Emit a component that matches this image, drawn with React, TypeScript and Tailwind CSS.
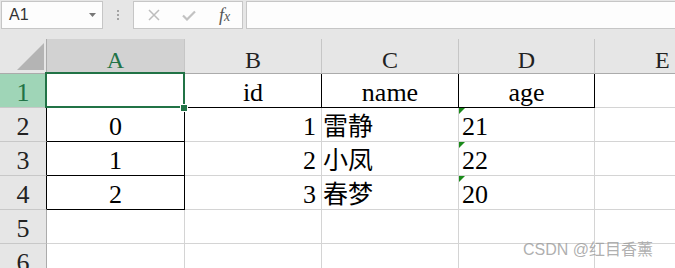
import React from 'react';

const serif = "font-['Liberation_Serif','Noto_Sans_CJK_SC',serif]";

type Row = { n: number; a: string; b: string; c: string; d: string };

const rows: Row[] = [
  { n: 2, a: '0', b: '1', c: '雷静', d: '21' },
  { n: 3, a: '1', b: '2', c: '小凤', d: '22' },
  { n: 4, a: '2', b: '3', c: '春梦', d: '20' },
];

// 左上角綠色小三角（文字格式數字）
function GreenFlag() {
  return (
    <svg className="absolute left-0 top-0" width="6" height="6" viewBox="0 0 6 6">
      <polygon points="0,0 6,0 0,6" fill="#1a8a1a" />
    </svg>
  );
}

function Toolbar() {
  return (
    <div className="flex h-[39px] items-start bg-[#e6e6e6] pt-[1px] pl-[1px]">
      <div className="flex h-[28px] w-[102px] items-center justify-between border border-[#c6c6c6] bg-[#fdfdfd] pl-[7px] pr-[6px]">
        <span className="font-['Liberation_Sans',sans-serif] text-[16px] text-[#333]">A1</span>
        <svg width="7" height="4" viewBox="0 0 7 4">
          <polygon points="0,0 7,0 3.5,4" fill="#777" />
        </svg>
      </div>
      <div className="flex h-[28px] w-[30px] flex-col items-center justify-center gap-[2px] pr-[1px]">
        <span className="h-[2px] w-[2px] bg-[#a3a3a3]" />
        <span className="h-[2px] w-[2px] bg-[#a3a3a3]" />
        <span className="h-[2px] w-[2px] bg-[#a3a3a3]" />
      </div>
      <div className="flex h-[28px] w-[110px] items-center border border-[#c6c6c6] bg-[#fdfdfd]">
        <div className="flex w-[37px] justify-center pl-[2px]">
          <svg width="12" height="12" viewBox="0 0 12 12">
            <path d="M1 1 L11 11 M11 1 L1 11" stroke="#bdbdbd" strokeWidth="1.5" />
          </svg>
        </div>
        <div className="flex w-[36px] justify-center">
          <svg width="14" height="11" viewBox="0 0 14 11">
            <path d="M1 5.5 L5 9.5 L13 1.5" stroke="#c2c2c2" strokeWidth="2.2" fill="none" />
          </svg>
        </div>
        <div className="flex w-[35px] justify-center">
          <span className="font-['Liberation_Serif',serif] text-[18px] italic leading-none text-[#555]">
            f<span className="text-[14px]">x</span>
          </span>
        </div>
      </div>
      <div className="ml-[3px] h-[28px] flex-1 border border-r-0 border-[#c6c6c6] bg-[#fdfdfd]" />
    </div>
  );
}

export default function App() {
  return (
    <div className="relative h-[268px] w-[675px] overflow-hidden bg-white">
      <Toolbar />

      <div
        className={`grid grid-cols-[47px_138px_137px_137px_136px_1fr] grid-rows-[35px_repeat(6,34px)] ${serif} text-[26px] leading-none text-black`}
      >
        {/* 欄標題 */}
        <div className="relative border-r border-b border-r-[#ababab] border-b-[#ababab] bg-[#e6e6e6]">
          <svg className="absolute left-[17px] top-[4px]" width="27" height="27" viewBox="0 0 27 27">
            <polygon points="0,27 27,27 27,0" fill="#b4b4b4" />
          </svg>
        </div>
        <div className="flex items-end justify-center border-r border-b border-r-[#c6c6c6] border-b-[#ababab] bg-[#d2d2d2] pb-[1px] text-[24px] text-[#217346]">
          A
        </div>
        <div className="flex items-end justify-center border-r border-b border-r-[#c6c6c6] border-b-[#ababab] bg-[#e6e6e6] pb-[1px] text-[24px] text-[#222]">
          B
        </div>
        <div className="flex items-end justify-center border-r border-b border-r-[#c6c6c6] border-b-[#ababab] bg-[#e6e6e6] pb-[1px] text-[24px] text-[#222]">
          C
        </div>
        <div className="flex items-end justify-center border-r border-b border-r-[#c6c6c6] border-b-[#ababab] bg-[#e6e6e6] pb-[1px] text-[24px] text-[#222]">
          D
        </div>
        <div className="flex items-end justify-start border-b border-b-[#ababab] bg-[#e6e6e6] pb-[1px] pl-[60px] text-[24px] text-[#222]">
          E
        </div>

        {/* 第 1 列 */}
        <div className="flex items-end justify-center border-r border-b border-r-[#ababab] border-b-[#c8c8c8] bg-[#9fd5b7] pb-[1px] text-[#217346]">
          1
        </div>
        <div className="border-r border-b border-[#d4d4d4]" />
        <div className="flex items-end justify-center border-r border-b border-black pb-[1px]">id</div>
        <div className="flex items-end justify-center border-r border-b border-black pb-[1px]">name</div>
        <div className="flex items-end justify-center border-r border-b border-black pb-[1px]">age</div>
        <div className="border-b border-[#d4d4d4]" />

        {rows.map((r) => (
          <React.Fragment key={r.n}>
            <div className="flex items-end justify-center border-r border-b border-r-black border-b-[#c8c8c8] bg-[#e6e6e6] pb-[1px] text-[#222]">
              {r.n}
            </div>
            <div className="flex items-end justify-center border-r border-b border-black pb-[1px]">{r.a}</div>
            <div className="flex items-end justify-end border-r border-b border-[#d4d4d4] pb-[1px] pr-[5px]">{r.b}</div>
            <div className="flex items-end justify-start border-r border-b border-[#d4d4d4] pb-[2px] pl-[1px] text-[25px]">
              {r.c}
            </div>
            <div className="relative flex items-end justify-start border-r border-b border-[#d4d4d4] pb-[1px] pl-[3px]">
              <GreenFlag />
              {r.d}
            </div>
            <div className="border-b border-[#d4d4d4]" />
          </React.Fragment>
        ))}

        {[5, 6].map((n) => (
          <React.Fragment key={n}>
            <div className="flex items-end justify-center border-r border-b border-r-[#ababab] border-b-[#c8c8c8] bg-[#e6e6e6] pb-[1px] text-[#222]">
              {n}
            </div>
            <div className="border-r border-b border-[#d4d4d4]" />
            <div className="border-r border-b border-[#d4d4d4]" />
            <div className="border-r border-b border-[#d4d4d4]" />
            <div className="border-r border-b border-[#d4d4d4]" />
            <div className="border-b border-[#d4d4d4]" />
          </React.Fragment>
        ))}
      </div>

      {/* 選取框 */}
      <div className="pointer-events-none absolute left-[45px] top-[72px] h-[36px] w-[140px] border-2 border-[#217346]" />
      <div className="absolute left-[180px] top-[104px] flex h-[8px] w-[8px] items-center justify-center bg-white">
        <div className="h-[6px] w-[6px] bg-[#217346]" />
      </div>

      {/* 浮水印 */}
      <div className="absolute left-[523px] top-[241px] font-['Liberation_Sans','Noto_Sans_CJK_SC',sans-serif] text-[16px] leading-[18px] text-[#9a9a9a]/80">
        CSDN @红目香薰
      </div>
    </div>
  );
}
